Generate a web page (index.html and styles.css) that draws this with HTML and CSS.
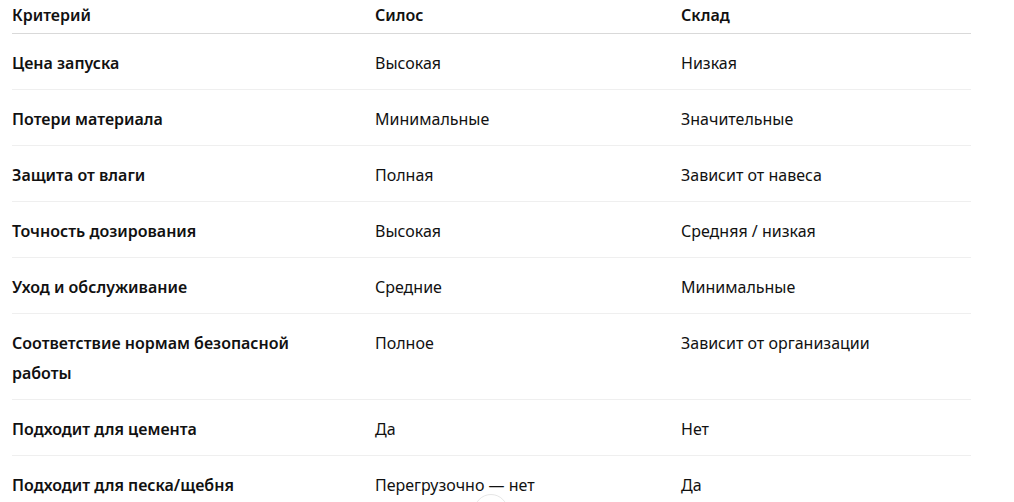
FILE: index.html
```html
<!DOCTYPE html>
<html lang="ru">
<head>
<meta charset="utf-8">
<link rel="stylesheet" href="styles.css">
</head>
<body>
<div class="wrap">
<table class="cmp">
  <thead>
    <tr><th class="c1">Критерий</th><th class="c2">Силос</th><th class="c3">Склад</th></tr>
  </thead>
  <tbody>
    <tr><td class="crit">Цена запуска</td><td>Высокая</td><td>Низкая</td></tr>
    <tr><td class="crit">Потери материала</td><td>Минимальные</td><td>Значительные</td></tr>
    <tr><td class="crit">Защита от влаги</td><td>Полная</td><td>Зависит от навеса</td></tr>
    <tr><td class="crit">Точность дозирования</td><td>Высокая</td><td>Средняя / низкая</td></tr>
    <tr><td class="crit">Уход и обслуживание</td><td>Средние</td><td>Минимальные</td></tr>
    <tr><td class="crit">Соответствие нормам безопасной работы</td><td>Полное</td><td>Зависит от организации</td></tr>
    <tr><td class="crit">Подходит для цемента</td><td>Да</td><td>Нет</td></tr>
    <tr><td class="crit">Подходит для песка/щебня</td><td>Перегрузочно — нет</td><td>Да</td></tr>
  </tbody>
</table>
</div>
<button class="scroll-btn" aria-label="Прокрутить вниз"></button>
</body>
</html>
```

FILE: styles.css
```css
html, body {
  margin: 0;
  padding: 0;
  background: #ffffff;
  overflow: hidden;
}
body {
  font-family: "Noto Sans", "Open Sans", sans-serif;
  font-size: 16px;
  color: #111111;
}
.wrap {
  padding-left: 12px;
}
.cmp {
  border-collapse: collapse;
  width: 959px;
  table-layout: fixed;
}
.cmp th, .cmp td {
  text-align: left;
  vertical-align: top;
  line-height: 30px;
  padding: 14px 32px 11px 0;
}
.cmp th {
  font-weight: 600;
  padding-top: 0;
  padding-bottom: 3px;
  border-bottom: 1px solid #d9d9d9;
}
.cmp td {
  border-bottom: 1px solid #efefef;
  font-weight: 400;
}
.cmp td.crit {
  font-weight: 600;
}
.c1 { width: 331px; }
.c2 { width: 274px; }
.c3 { width: 258px; }
.scroll-btn {
  position: absolute;
  left: 474px;
  top: 494px;
  width: 34px;
  height: 34px;
  border-radius: 50%;
  border: 1px solid #e6e6e6;
  background: #ffffff;
  padding: 0;
}
```
